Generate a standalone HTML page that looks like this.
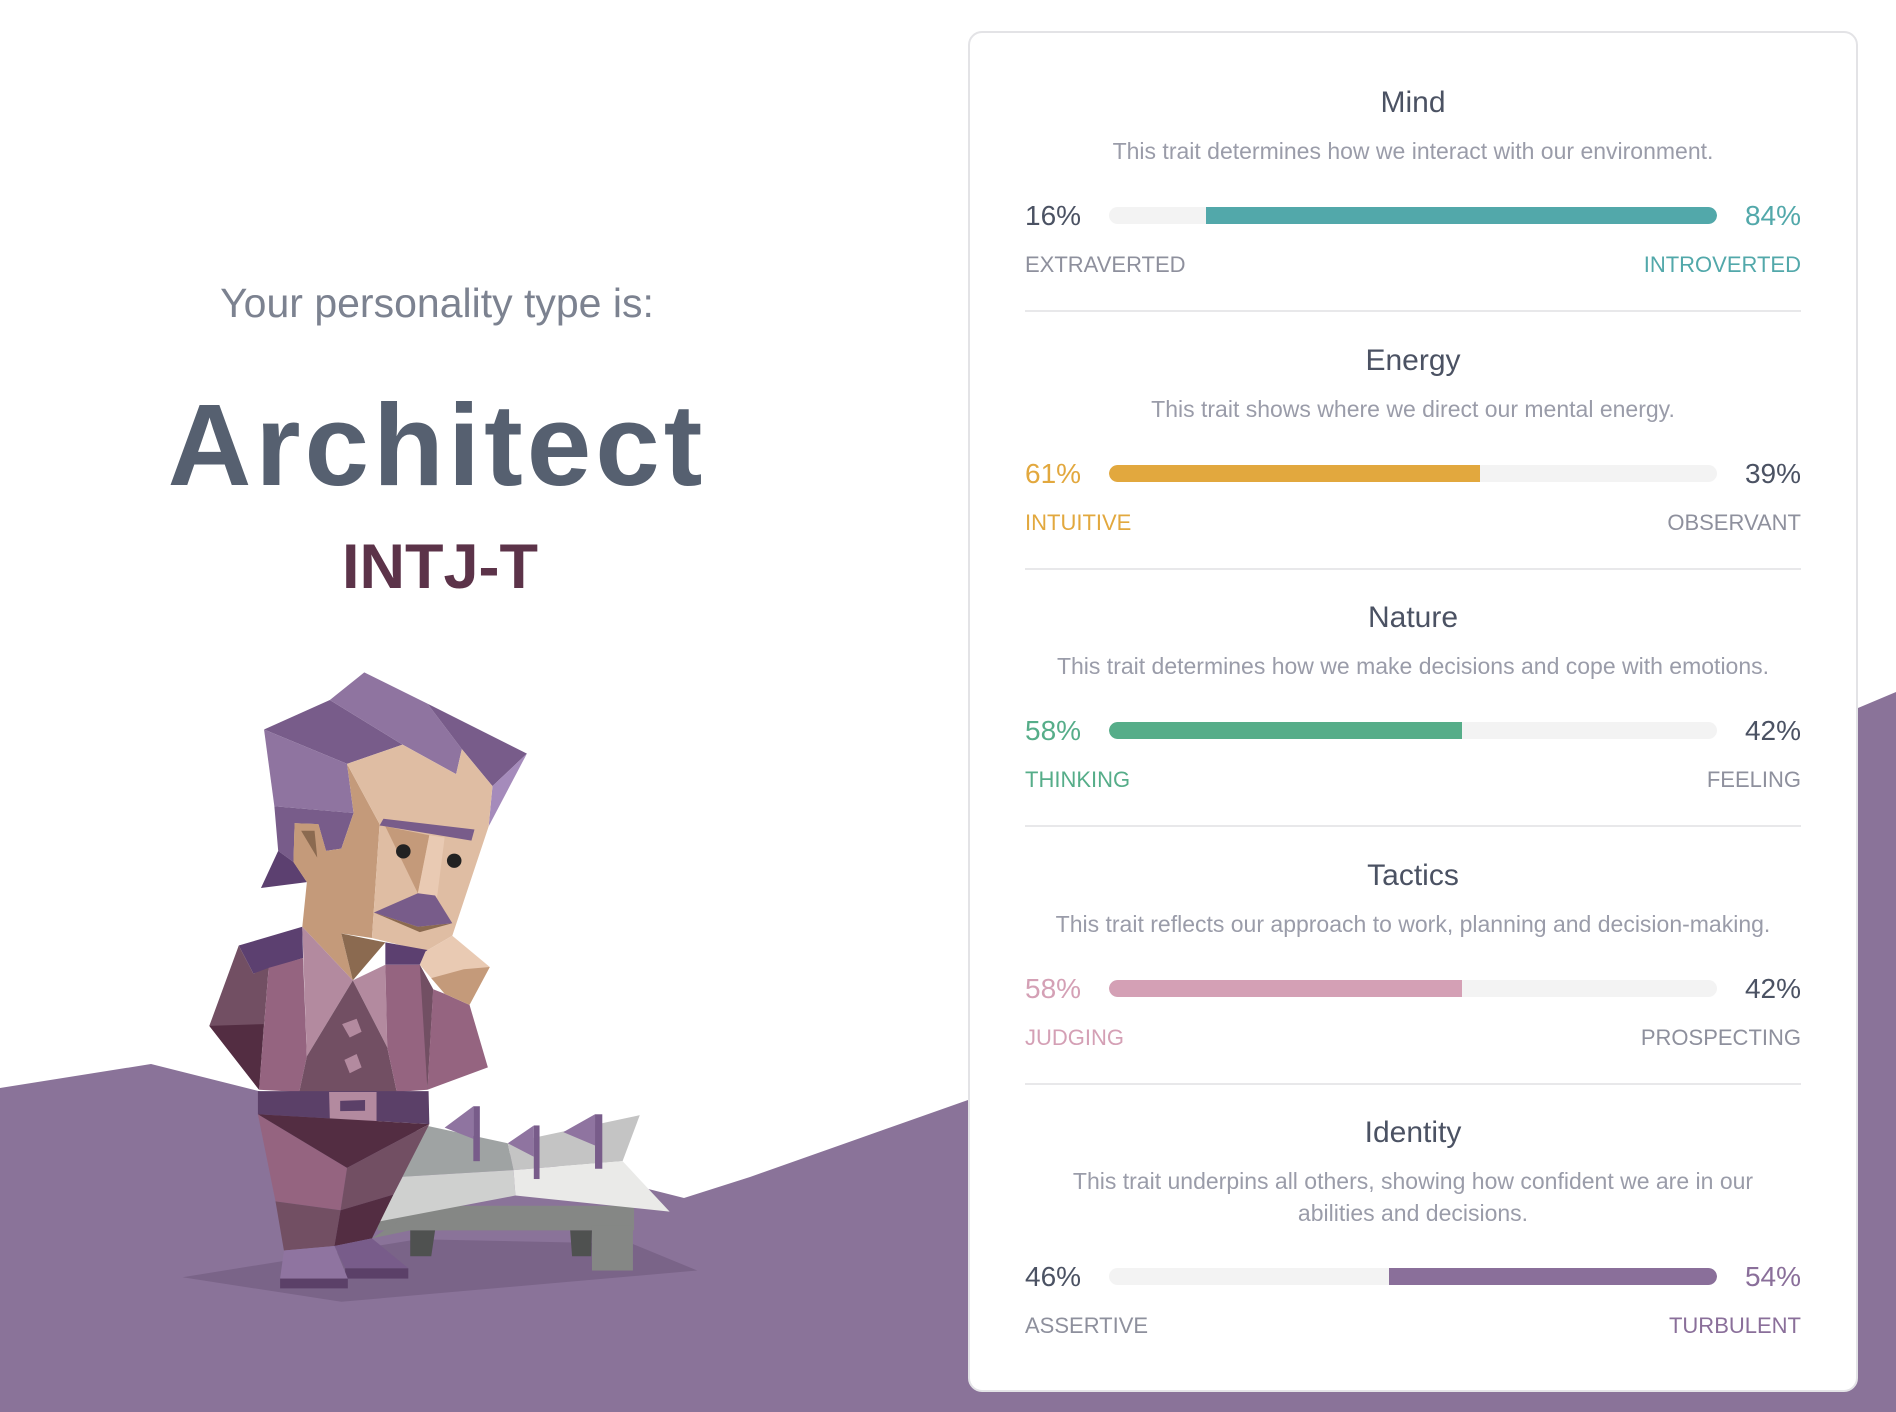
<!DOCTYPE html>
<html><head><meta charset="utf-8"><style>
*{margin:0;padding:0;box-sizing:border-box}
body{width:1896px;height:1412px;position:relative;overflow:hidden;background:#fff;font-family:"Liberation Sans",sans-serif}
.abs{position:absolute}
.card{position:absolute;left:968px;top:31px;width:890px;height:1361px;background:#fff;border:2px solid #e3e3e6;border-radius:14px}
.sec{position:absolute;left:1025px;width:776px;height:320px}
.t{position:absolute;left:0;width:776px;text-align:center;font-size:30px;line-height:36px;color:#4b5263;top:85px}
.d{position:absolute;left:0;width:776px;text-align:center;font-size:23px;line-height:28px;color:#9a9ca9;top:137px}
.pl,.pr{position:absolute;font-size:28px;line-height:36px;top:198px;color:#4b5263}
.pl{left:0}.pr{right:0}
.bar{position:absolute;left:84px;width:608px;height:17px;top:207px;background:#f3f3f3;border-radius:9px;overflow:hidden}
.f{position:absolute;top:0;height:17px}
.ll,.lr{position:absolute;font-size:22px;line-height:28px;top:251px;color:#8e909d}
.ll{left:0}.lr{right:0}
.hr{position:absolute;left:0;width:776px;top:310px;height:2px;background:#e8e8ea}
</style></head><body>
<svg class="abs" style="left:0;top:0" width="1896" height="1412">
<polygon points="0,1088 151,1064 684,1198 750,1177 968,1100 1858,708 1896,692 1896,1412 0,1412" fill="#8a7399"/>
</svg>

<div class="abs" style="left:137px;width:600px;top:283px;text-align:center;font-size:41px;line-height:41px;color:#7c8290">Your personality type is:</div>
<div class="abs" style="left:137px;width:600px;top:387px;text-align:center;font-size:116px;line-height:116px;font-weight:bold;letter-spacing:4px;color:#566070">Architect</div>
<div class="abs" style="left:140px;width:600px;top:536px;text-align:center;font-size:63px;line-height:63px;font-weight:bold;color:#5c3349">INTJ-T</div>

<svg class="abs" style="left:150px;top:650px" width="600" height="700" viewBox="0 0 1568 1568" preserveAspectRatio="none">
<polygon points="85,1405 700,1320 1260,1330 1430,1390 500,1460" fill="#7a6488"/>
<!-- table -->
<polygon points="595,1245 1265,1245 1265,1300 595,1300" fill="#858785"/>
<polygon points="580,1318 720,1240 760,1300 680,1300" fill="#858785"/>
<polygon points="680,1300 745,1300 735,1358 680,1358" fill="#4f5150"/>
<polygon points="1098,1300 1155,1300 1153,1358 1103,1358" fill="#4f5150"/>
<polygon points="1155,1290 1262,1290 1262,1390 1155,1390" fill="#858785"/>
<polygon points="720,1065 935,1105 950,1165 660,1180" fill="#9fa3a3"/>
<polygon points="935,1105 1280,1042 1235,1145 950,1165" fill="#c4c4c4"/>
<polygon points="600,1280 660,1180 950,1165 955,1222" fill="#cfd0cf"/>
<polygon points="950,1165 1235,1145 1358,1258 955,1222" fill="#eaeae8"/>
<polygon points="770,1070 845,1022 845,1095" fill="#8f74a0"/>
<polygon points="935,1105 1003,1065 1003,1135" fill="#8f74a0"/>
<polygon points="1080,1080 1163,1040 1163,1110" fill="#8f74a0"/>
<rect x="845" y="1022" width="17" height="123" fill="#785c8a"/>
<rect x="1003" y="1065" width="15" height="120" fill="#785c8a"/>
<rect x="1163" y="1040" width="19" height="122" fill="#785c8a"/>
<!-- hair -->
<polygon points="298,178 470,112 660,212 515,255" fill="#785c8a"/>
<polygon points="470,112 560,50 725,120 815,222 800,278 660,212" fill="#8f74a0"/>
<polygon points="725,120 985,232 895,305 815,222" fill="#785c8a"/>
<polygon points="985,232 895,305 885,395" fill="#a58bbb"/>
<polygon points="298,178 515,255 532,365 325,350" fill="#8f74a0"/>
<polygon points="325,350 532,365 500,445 460,450 440,390 378,388 375,475 335,450" fill="#785c8a"/>
<polygon points="335,450 375,475 410,520 290,533" fill="#5c4070"/>
<!-- face -->
<polygon points="515,255 600,390 580,645 500,635 530,740 398,620 410,520 375,475 378,388 440,390 460,450 500,445 532,365" fill="#c49a7a"/>
<polygon points="515,255 660,212 800,278 815,222 895,305 885,395 790,640 720,675 580,645 600,390" fill="#dfbda3"/>
<polygon points="378,388 440,390 460,450 450,485 410,520 375,475" fill="#c49a7a"/>
<polygon points="395,405 430,405 437,465" fill="#8b6a50"/>
<polygon points="615,395 730,415 700,545" fill="#c49a7a"/>
<polygon points="730,415 770,420 750,555 700,545" fill="#e9cab3"/>
<polygon points="610,378 848,402 840,427 600,393" fill="#785c8a"/>
<ellipse cx="662" cy="451" rx="19" ry="16" fill="#222"/>
<ellipse cx="795" cy="472" rx="19" ry="16" fill="#222"/>
<polygon points="585,588 700,620 790,612 705,632" fill="#8b6a50"/>
<polygon points="585,588 700,545 745,550 790,612 700,620" fill="#785c8a"/>
<polygon points="500,635 615,655 530,740" fill="#8b6a50"/>
<!-- body -->
<polygon points="232,662 398,620 400,690 270,725" fill="#5c4070"/>
<polygon points="615,655 725,672 705,705 615,705" fill="#5c4070"/>
<polygon points="232,662 270,725 310,712 285,985 155,842" fill="#724f63"/>
<polygon points="155,842 297,838 285,985" fill="#532d42"/>
<polygon points="310,712 400,690 410,910 390,990 285,985" fill="#956480"/>
<polygon points="398,620 530,740 410,910" fill="#b38a9f"/>
<polygon points="530,740 615,705 620,890" fill="#b38a9f"/>
<polygon points="410,910 530,740 620,890 645,990 390,990" fill="#724f63"/>
<polygon points="502,838 540,826 553,855 522,868" fill="#b38a9f"/>
<polygon points="508,918 540,905 553,935 522,948" fill="#b38a9f"/>
<polygon points="615,705 705,705 740,760 725,985 645,990 620,890" fill="#956480"/>
<polygon points="705,705 740,760 725,985" fill="#724f63"/>
<polygon points="740,760 770,770 835,795 883,935 725,985" fill="#956480"/>
<polygon points="720,675 790,640 888,710 835,795 770,770 735,735 705,705" fill="#e9cab3"/>
<polygon points="735,735 820,715 888,710 835,795 770,770" fill="#c49a7a"/>
<polygon points="282,988 728,988 730,1062 282,1040" fill="#5b4068"/>
<polygon points="468,990 592,990 592,1055 470,1052" fill="#b38a9f"/>
<polygon points="497,1010 562,1008 562,1032 497,1033" fill="#5b4068"/>
<polygon points="282,1040 515,1160 498,1255 328,1235" fill="#956480"/>
<polygon points="282,1040 730,1062 515,1160" fill="#532d42"/>
<polygon points="730,1062 636,1220 498,1255 515,1160" fill="#724f63"/>
<polygon points="328,1235 498,1255 482,1335 350,1345" fill="#724f63"/>
<polygon points="498,1255 636,1220 580,1318 482,1335" fill="#532d42"/>
<polygon points="482,1335 580,1318 675,1385 510,1385" fill="#785c8a"/>
<rect x="510" y="1385" width="165" height="23" fill="#5b4068"/>
<polygon points="350,1345 482,1335 517,1408 340,1408" fill="#8f74a0"/>
<rect x="340" y="1408" width="177" height="22" fill="#5b4068"/>
</svg>

<div class="card"></div>

<div class="sec" style="top:0">
<div class="t">Mind</div>
<div class="d">This trait determines how we interact with our environment.</div>
<div class="pl">16%</div><div class="pr" style="color:#52a8aa">84%</div>
<div class="bar"><div class="f" style="left:16%;right:0;background:#52a8aa;border-radius:0 9px 9px 0"></div></div>
<div class="ll">EXTRAVERTED</div><div class="lr" style="color:#52a8aa">INTROVERTED</div>
<div class="hr"></div>
</div>

<div class="sec" style="top:258px">
<div class="t">Energy</div>
<div class="d">This trait shows where we direct our mental energy.</div>
<div class="pl" style="color:#e2a83e">61%</div><div class="pr">39%</div>
<div class="bar"><div class="f" style="left:0;width:61%;background:#e2a83e;border-radius:9px 0 0 9px"></div></div>
<div class="ll" style="color:#e2a83e">INTUITIVE</div><div class="lr">OBSERVANT</div>
<div class="hr"></div>
</div>

<div class="sec" style="top:515px">
<div class="t">Nature</div>
<div class="d">This trait determines how we make decisions and cope with emotions.</div>
<div class="pl" style="color:#56ad89">58%</div><div class="pr">42%</div>
<div class="bar"><div class="f" style="left:0;width:58%;background:#56ad89;border-radius:9px 0 0 9px"></div></div>
<div class="ll" style="color:#56ad89">THINKING</div><div class="lr">FEELING</div>
<div class="hr"></div>
</div>

<div class="sec" style="top:773px">
<div class="t">Tactics</div>
<div class="d">This trait reflects our approach to work, planning and decision-making.</div>
<div class="pl" style="color:#d4a0b5">58%</div><div class="pr">42%</div>
<div class="bar"><div class="f" style="left:0;width:58%;background:#d4a0b5;border-radius:9px 0 0 9px"></div></div>
<div class="ll" style="color:#d4a0b5">JUDGING</div><div class="lr">PROSPECTING</div>
<div class="hr"></div>
</div>

<div class="sec" style="top:1030px">
<div class="t">Identity</div>
<div class="d" style="top:135px;line-height:32px">This trait underpins all others, showing how confident we are in our<br>abilities and decisions.</div>
<div class="pl" style="top:229px">46%</div><div class="pr" style="top:229px;color:#8a6f9a">54%</div>
<div class="bar" style="top:238px"><div class="f" style="left:46%;right:0;background:#8a6f9a;border-radius:0 9px 9px 0"></div></div>
<div class="ll" style="top:282px">ASSERTIVE</div><div class="lr" style="top:282px;color:#8a6f9a">TURBULENT</div>
</div>
</body></html>
